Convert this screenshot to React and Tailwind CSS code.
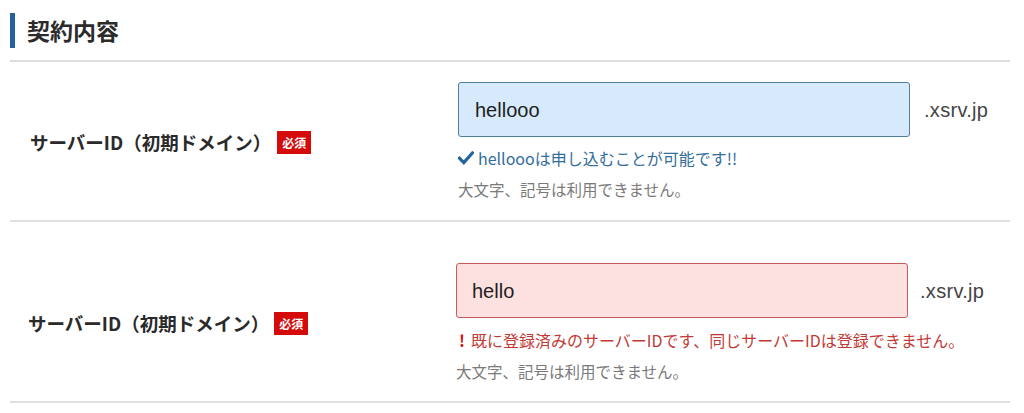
import React from "react";

const jp = { fontFamily: '"Noto Sans CJK JP", "Noto Sans", sans-serif' };
const latin = { fontFamily: '"Liberation Sans", "Noto Sans CJK JP", sans-serif' };

function Badge({ className }) {
  return (
    <span className={"inline-flex h-[23px] w-[34px] items-center justify-center bg-[#d50b0b] text-[12px] font-bold leading-none text-white " + className}>
      必須
    </span>
  );
}

function Label({ className, badgeClass }) {
  return (
    <div className={"flex items-center " + className}>
      <span className="text-[18.5px] font-bold text-[#2a2a2a]">サーバーID（初期ドメイン）</span>
      <Badge className={badgeClass} />
    </div>
  );
}

function Check() {
  return (
    <svg width="16" height="14" viewBox="0 0 16 14" className="mr-[4px] shrink-0">
      <path d="M1.4 7.2 L5.8 11.6 L14.4 2" fill="none" stroke="#23659e" strokeWidth="3.2" strokeLinecap="square" />
    </svg>
  );
}

export default function App() {
  return (
    <div className="w-[1024px] h-[413px] overflow-hidden bg-white" style={jp}>
      <div className="ml-[10px] w-[1000px]">
        <div className="pt-[13px]">
          <div className="flex h-[35px] items-center border-l-[5px] border-[#23629e] pl-[12px]">
            <h2 className="text-[23px] font-bold leading-none text-[#2b2b2b]">契約内容</h2>
          </div>
        </div>
        <div className="mt-[12px] h-[2px] bg-[#dedede]" />

        {/* Row 1 */}
        <div className="flex items-center pt-[20px] pb-[20px]">
          <Label className="w-[448px] pl-[20px] pt-[3px]" badgeClass="ml-[6px]" />
          <div className="flex flex-col">
            <div className="flex items-center">
              <div className="flex h-[55px] w-[452px] items-center rounded-[3px] border border-[#4f7f9c] bg-[#d6eafb] pl-[16px]">
                <span className="text-[20px] text-[#1e1e1e]" style={latin}>hellooo</span>
              </div>
              <span className="ml-[14px] text-[20px] tracking-[0.3px] text-[#444]" style={latin}>.xsrv.jp</span>
            </div>
            <div className="mt-[10px] flex items-center text-[16px] leading-[22px] text-[#336d9c]">
              <Check />
              <span>hellooo</span>
              <span>は申し込むことが可能です!!</span>
            </div>
            <div className="mt-[9px] text-[15.5px] leading-[22px] text-[#7a7a7a]">大文字、記号は利用できません。</div>
          </div>
        </div>
        <div className="h-[2px] bg-[#e0e0e0]" />

        {/* Row 2 */}
        <div className="flex items-center pt-[41px] pb-[19px]">
          <Label className="w-[446px] pl-[18px] pt-[2px]" badgeClass="ml-[5px]" />
          <div className="flex flex-col">
            <div className="flex items-center">
              <div className="flex h-[55px] w-[452px] items-center rounded-[3px] border border-[#c65a5d] bg-[#fde1e1] pl-[15px]">
                <span className="text-[20px] text-[#1e1e1e]" style={latin}>hello</span>
              </div>
              <span className="ml-[12px] text-[20px] tracking-[0.3px] text-[#444]" style={latin}>.xsrv.jp</span>
            </div>
            <div className="mt-[11px] flex items-center text-[16px] leading-[22px] text-[#c23a36]">
              <span className="mr-[6px] ml-[3px] text-[16px] font-bold text-[#d60f0f]">!</span>
              <span>既に登録済みのサーバーIDです、同じサーバーIDは登録できません。</span>
            </div>
            <div className="mt-[9px] text-[15.5px] leading-[22px] text-[#7a7a7a]">大文字、記号は利用できません。</div>
          </div>
        </div>
        <div className="h-[2px] bg-[#e0e0e0]" />
      </div>
    </div>
  );
}
